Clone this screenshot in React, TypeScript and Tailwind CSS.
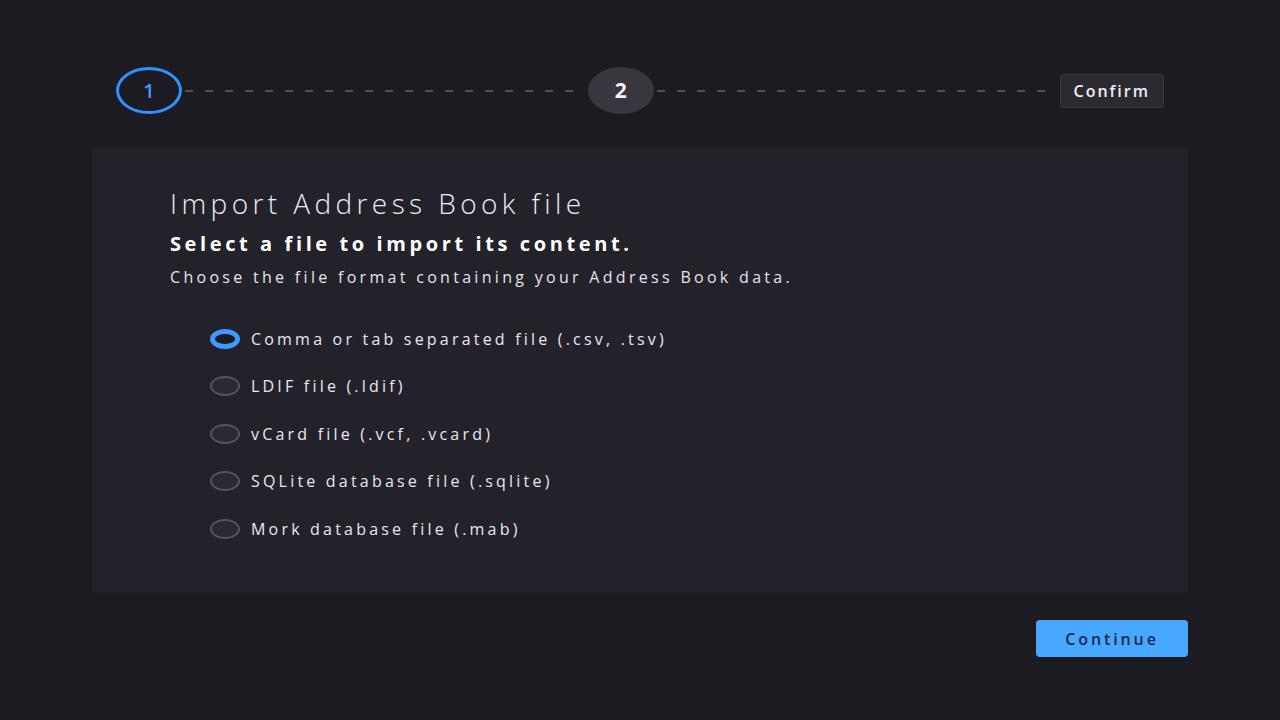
const options = [
  'Comma or tab separated file (.csv, .tsv)',
  'LDIF file (.ldif)',
  'vCard file (.vcf, .vcard)',
  'SQLite database file (.sqlite)',
  'Mork database file (.mab)',
];

function Dashes() {
  return (
    <div className="flex-1 h-[2px] mx-[3px] bg-[repeating-linear-gradient(90deg,#4f4e57_0px,#4f4e57_8px,transparent_8px,transparent_20px)]" />
  );
}

function Radio({ checked, label }: { checked?: boolean; label: string }) {
  return (
    <label className="flex items-center gap-[11px] h-[47.5px] cursor-pointer">
      {checked ? (
        <span className="w-[30px] h-[20px] rounded-[50%] border-[5px] border-[#3d9bff] bg-[#1c1b22]" />
      ) : (
        <span className="w-[30px] h-[20px] rounded-[50%] border-2 border-[#55545c] bg-[#2b2a33]" />
      )}
      <span className="text-[16px] font-medium text-[#e8e8ec] tracking-[3.2px]">{label}</span>
    </label>
  );
}

export default function App() {
  return (
    <div className="min-h-[720px] w-full bg-[#1c1b22] font-['Open_Sans',sans-serif] text-white px-[92px] pt-[67px]">
      {/* Stepper */}
      <div className="flex items-center px-[24px]">
        <div className="w-[66px] h-[47px] rounded-[50%] border-[3px] border-[#2e92ff] flex items-center justify-center text-[#3d9bff] text-[20px] font-semibold">
          1
        </div>
        <Dashes />
        <div className="w-[66px] h-[47px] rounded-[50%] bg-[#38373f] flex items-center justify-center text-[#f3f3f5] text-[21px] font-bold">
          2
        </div>
        <Dashes />
        <div className="h-[34px] px-[13px] rounded-[4px] bg-[#2b2a33] border border-[#3a3942] flex items-center text-[16px] font-semibold tracking-[2px] text-[#eeeef0]">
          Confirm
        </div>
      </div>

      {/* Card */}
      <div className="mt-[33px] h-[446px] rounded-[4px] bg-[#23222b] pl-[78px] pt-[36px]">
        <h1 className="text-[28px] font-light leading-[40px] tracking-[4.4px] text-[#ececf0]">
          Import Address Book file
        </h1>
        <p className="mt-[7px] text-[20px] font-bold leading-[28px] tracking-[3.6px] text-white">
          Select a file to import its content.
        </p>
        <p className="mt-[7px] text-[16px] leading-[24px] tracking-[3.3px] text-[#e4e4e8]">
          Choose the file format containing your Address Book data.
        </p>
        <div className="mt-[26px] pl-[40px] flex flex-col">
          {options.map((o, i) => (
            <Radio key={o} label={o} checked={i === 0} />
          ))}
        </div>
      </div>

      {/* Footer */}
      <div className="flex justify-end mt-[27px]">
        <button className="w-[152px] h-[37px] rounded-[4px] bg-[#48a7ff] text-[#1b2a4a] text-[16px] font-semibold tracking-[2.9px]">
          Continue
        </button>
      </div>
    </div>
  );
}
